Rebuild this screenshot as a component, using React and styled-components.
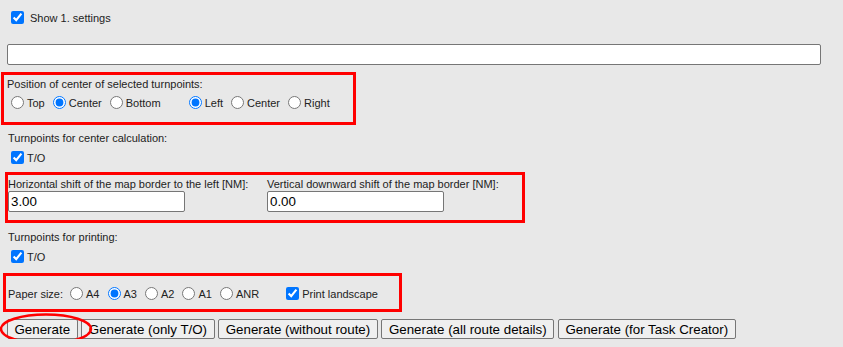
import React from "react";
import styled, { createGlobalStyle } from "styled-components";

const GlobalStyle = createGlobalStyle`
  body {
    margin: 0;
    background: #e8e8e8;
    font-family: "Liberation Sans", Arial, sans-serif;
    font-size: 11px;
    color: #222;
  }
`;

const Page = styled.div`
  padding-top: 8px;
  display: flex;
  flex-direction: column;
  align-items: flex-start;
`;

const Row = styled.div`
  display: flex;
  align-items: center;
  height: ${(p) => p.$h || 19}px;
  margin-left: ${(p) => p.$left || 0}px;
  margin-top: ${(p) => p.$top || 0}px;
`;

const Checkbox = styled.input.attrs({ type: "checkbox" })`
  width: 13px;
  height: 13px;
  margin: 0 ${(p) => p.$gap || 3}px 0 0;
  accent-color: #0075ff;
`;

const Radio = styled.input.attrs({ type: "radio" })`
  width: 13px;
  height: 13px;
  margin: 0 3px 0 0;
  accent-color: #0075ff;
`;

// label text sits a touch lower than the centre of its control
const Text = styled.span`
  white-space: nowrap;
  line-height: 13px;
  padding-top: 2px;
`;

const SectionLabel = styled.div`
  line-height: 16px;
  margin: ${(p) => p.$top || 0}px 0 0 8px;
`;

const WideInput = styled.input.attrs({ type: "text" })`
  box-sizing: border-box;
  width: 814px;
  height: 21px;
  margin: 17px 0 0 7px;
  border: 1px solid #767676;
  border-radius: 2px;
  background: #fff;
`;

const Highlight = styled.div`
  box-sizing: border-box;
  border: 3px solid #ff0000;
  margin-left: ${(p) => p.$left}px;
  margin-top: ${(p) => p.$top}px;
  width: ${(p) => p.$width}px;
  padding: ${(p) => p.$pad};
`;

const BoxLabel = styled.div`
  line-height: 16px;
`;

const Options = styled.div`
  display: flex;
  align-items: center;
  gap: 8px;
  height: ${(p) => p.$h || 20}px;
  margin-left: ${(p) => p.$left || 0}px;
`;

const Option = styled.label`
  display: inline-flex;
  align-items: center;
  margin-left: ${(p) => p.$extra || 0}px;
`;

const ShiftGrid = styled.div`
  display: grid;
  grid-template-columns: 259px 177px;
`;

const ShiftField = styled.div`
  display: flex;
  flex-direction: column;
`;

const ShiftLabel = styled.div`
  line-height: 13px;
  white-space: nowrap;
`;

const NumberInput = styled.input.attrs({ type: "text" })`
  box-sizing: border-box;
  width: 177px;
  height: 21px;
  margin: 0;
  padding: 1px 2px;
  border: 1px solid #767676;
  border-radius: 2px;
  background: #fff;
  font-family: "Liberation Sans", Arial, sans-serif;
  font-size: 13.33px;
  color: #000;
`;

const PaperLabel = styled.span`
  margin-right: -1px;
  padding-top: 2px;
`;

const ButtonBar = styled.div`
  display: flex;
  gap: 3.7px;
  margin: 7px 0 0 7px;
`;

const Button = styled.button`
  height: 20px;
  padding: 0 6.5px;
  border: 1px solid #767676;
  border-radius: 2px;
  background: #efefef;
  font-family: "Liberation Sans", Arial, sans-serif;
  font-size: 13.33px;
  color: #000;
  white-space: nowrap;
`;

const Circled = styled.span`
  position: relative;
  display: inline-flex;
`;

const Ring = styled.svg`
  position: absolute;
  left: -7px;
  top: -6px;
  width: 93px;
  height: 32px;
  pointer-events: none;
  overflow: visible;
`;

const buttons = [
  "Generate (only T/O)",
  "Generate (without route)",
  "Generate (all route details)",
  "Generate (for Task Creator)",
];

export default function App() {
  return (
    <>
      <GlobalStyle />
      <Page>
        <Row $left={11}>
          <Checkbox defaultChecked $gap={6} />
          <Text>Show 1. settings</Text>
        </Row>

        <WideInput />

        <Highlight $left={1} $top={7} $width={355} $pad="1px 3px 10px">
          <BoxLabel>Position of center of selected turnpoints:</BoxLabel>
          <Options $left={4}>
            <Option><Radio name="v" /><Text>Top</Text></Option>
            <Option><Radio name="v" defaultChecked /><Text>Center</Text></Option>
            <Option><Radio name="v" /><Text>Bottom</Text></Option>
            <Option $extra={20}><Radio name="h" defaultChecked /><Text>Left</Text></Option>
            <Option><Radio name="h" /><Text>Center</Text></Option>
            <Option><Radio name="h" /><Text>Right</Text></Option>
          </Options>
        </Highlight>

        <SectionLabel $top={5}>Turnpoints for center calculation:</SectionLabel>
        <Row $left={11} $top={2}>
          <Checkbox defaultChecked />
          <Text>T/O</Text>
        </Row>

        <Highlight $left={5} $top={5} $width={520} $pad="3px 0 8px">
          <ShiftGrid>
            <ShiftField>
              <ShiftLabel>Horizontal shift of the map border to the left [NM]:</ShiftLabel>
              <NumberInput defaultValue="3.00" />
            </ShiftField>
            <ShiftField>
              <ShiftLabel>Vertical downward shift of the map border [NM]:</ShiftLabel>
              <NumberInput defaultValue="0.00" />
            </ShiftField>
          </ShiftGrid>
        </Highlight>

        <SectionLabel $top={6}>Turnpoints for printing:</SectionLabel>
        <Row $left={11} $top={2}>
          <Checkbox defaultChecked />
          <Text>T/O</Text>
        </Row>

        <Highlight $left={3} $top={7} $width={399} $pad="3px 2px 2px">
          <Options $h={28}>
            <PaperLabel>Paper size:</PaperLabel>
            <Option><Radio name="p" /><Text>A4</Text></Option>
            <Option><Radio name="p" defaultChecked /><Text>A3</Text></Option>
            <Option><Radio name="p" /><Text>A2</Text></Option>
            <Option><Radio name="p" /><Text>A1</Text></Option>
            <Option><Radio name="p" /><Text>ANR</Text></Option>
            <Option $extra={19}><Checkbox defaultChecked /><Text>Print landscape</Text></Option>
          </Options>
        </Highlight>

        <ButtonBar>
          <Circled>
            <Button>Generate</Button>
            <Ring viewBox="0 0 93 32">
              <ellipse cx="46" cy="16" rx="45" ry="14.5" fill="none" stroke="#ff0000" strokeWidth="2.5" />
            </Ring>
          </Circled>
          {buttons.map((b) => (
            <Button key={b}>{b}</Button>
          ))}
        </ButtonBar>
      </Page>
    </>
  );
}
